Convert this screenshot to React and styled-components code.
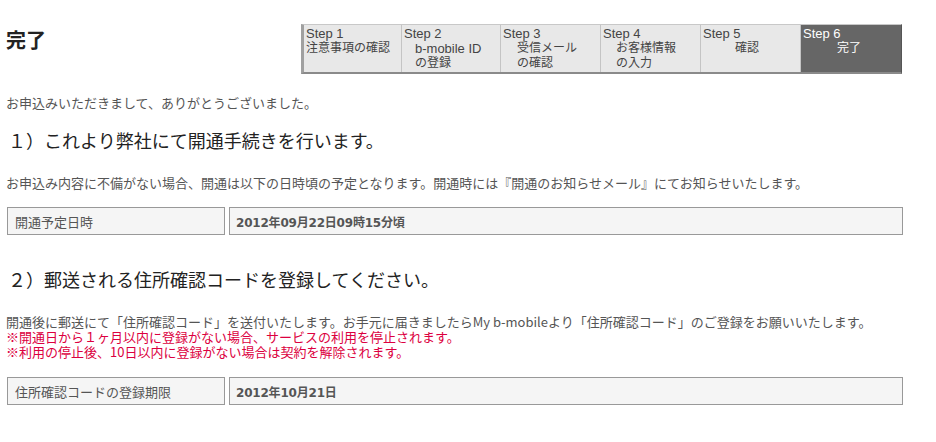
import React from 'react';
import styled, { createGlobalStyle } from 'styled-components';

const GlobalStyle = createGlobalStyle`
    body {
        margin: 0;
        background: #fff;
        font-family: "Noto Sans CJK JP", "Liberation Sans", sans-serif;
        color: #444;
    }
`;

const Page = styled.div`
    width: 936px;
    padding: 24px 0 0 6px;
    box-sizing: border-box;
`;

const Header = styled.div`
    display: flex;
    align-items: flex-start;
    justify-content: space-between;
    width: 896px;
`;

const Title = styled.h1`
    margin: 3px 0 0 0;
    font-size: 20px;
    line-height: 26px;
    font-weight: bold;
    color: #222;
`;

const Steps = styled.div`
    display: flex;
    width: 601px;
    height: 50px;
    box-sizing: border-box;
    border-top: 1px solid #c8c8c8;
    border-left: 3px solid #a0a0a0;
    border-bottom: 2px solid #8a8a8a;
    border-right: 1px solid #555;
    font-family: "Liberation Sans", "Noto Sans CJK JP", sans-serif;
    font-size: 13px;
    line-height: 15px;
`;

const Step = styled.div`
    flex: 0 0 ${({w}) => w}px;
    box-sizing: border-box;
    padding: 1px 0 0 2px;
    background: ${({active}) => (active ? '#666' : '#e8e8e8')};
    color: ${({active}) => (active ? '#fff' : '#444')};
    border-right: 1px solid ${({active}) => (active ? '#666' : '#c4c4c4')};
    &:last-child { border-right: none; }
`;

const StepLine = styled.div`
    padding-left: ${({indent}) => indent || 0}px;
    font-size: ${({cjk}) => (cjk ? '12px' : '13px')};
    white-space: nowrap;
`;

const Text = styled.p`
    margin: ${({m}) => m || '0'};
    font-size: 13px;
    line-height: 15px;
    color: ${({red}) => (red ? '#dc0040' : '#555')};
    white-space: nowrap;
`;

const Heading = styled.h2`
    margin: ${({m}) => m};
    font-size: 18px;
    line-height: 22px;
    font-weight: 400;
    color: #222;
    padding-left: 2px;
`;

const InfoTable = styled.div`
    display: flex;
    gap: 4px;
    width: 896px;
    margin: ${({m}) => m};
    padding-left: 1px;
`;

const Cell = styled.div`
    box-sizing: border-box;
    height: 28px;
    display: flex;
    align-items: center;
    border: 1px solid #999;
    background: #f5f5f5;
    font-size: 13px;
    color: #555;
    ${({label}) => label ? `
        flex: 0 0 218px;
        padding-left: 7px;
    ` : `
        flex: 1;
        padding-left: 6px;
        font-family: "DejaVu Sans", "Noto Sans CJK JP", sans-serif;
        font-weight: bold;
        font-size: 12px;
        letter-spacing: -0.2px;
    `}
`;

const steps = [
    {w: 98, lines: [['Step 1'], ['注意事項の確認', 0, true]]},
    {w: 99, lines: [['Step 2'], ['b-mobile ID', 11], ['の登録', 11, true]]},
    {w: 100, lines: [['Step 3'], ['受信メール', 14, true], ['の確認', 14, true]]},
    {w: 100, lines: [['Step 4'], ['お客様情報', 13, true], ['の入力', 13, true]]},
    {w: 100, lines: [['Step 5'], ['確認', 32, true]]},
    {w: 100, active: true, lines: [['Step 6'], ['完了', 34, true]]},
];

export default function App() {
    return (
        <Page>
            <GlobalStyle/>
            <Header>
                <Title>完了</Title>
                <Steps>
                    {steps.map((s, i) => (
                        <Step key={i} w={s.w} active={s.active}>
                            {s.lines.map(([t, ind, cjk], j) => (
                                <StepLine key={j} indent={ind} cjk={cjk}>{t}</StepLine>
                            ))}
                        </Step>
                    ))}
                </Steps>
            </Header>

            <Text m="21px 0 0 0">お申込みいただきまして、ありがとうございました。</Text>

            <Heading m="19px 0 0 0">１）これより弊社にて開通手続きを行います。</Heading>
            <Text m="24px 0 0 0">お申込み内容に不備がない場合、開通は以下の日時頃の予定となります。開通時には『開通のお知らせメール』にてお知らせいたします。</Text>
            <InfoTable m="17px 0 0 0">
                <Cell label>開通予定日時</Cell>
                <Cell>2012年09月22日09時15分頃</Cell>
            </InfoTable>

            <Heading m="33px 0 0 0">２）郵送される住所確認コードを登録してください。</Heading>
            <Text m="24px 0 0 0">開通後に郵送にて「住所確認コード」を送付いたします。お手元に届きましたらMy b-mobileより「住所確認コード」のご登録をお願いいたします。</Text>
            <Text red>※開通日から１ヶ月以内に登録がない場合、サービスの利用を停止されます。</Text>
            <Text red>※利用の停止後、10日以内に登録がない場合は契約を解除されます。</Text>
            <InfoTable m="18px 0 0 0">
                <Cell label>住所確認コードの登録期限</Cell>
                <Cell>2012年10月21日</Cell>
            </InfoTable>
        </Page>
    );
}
